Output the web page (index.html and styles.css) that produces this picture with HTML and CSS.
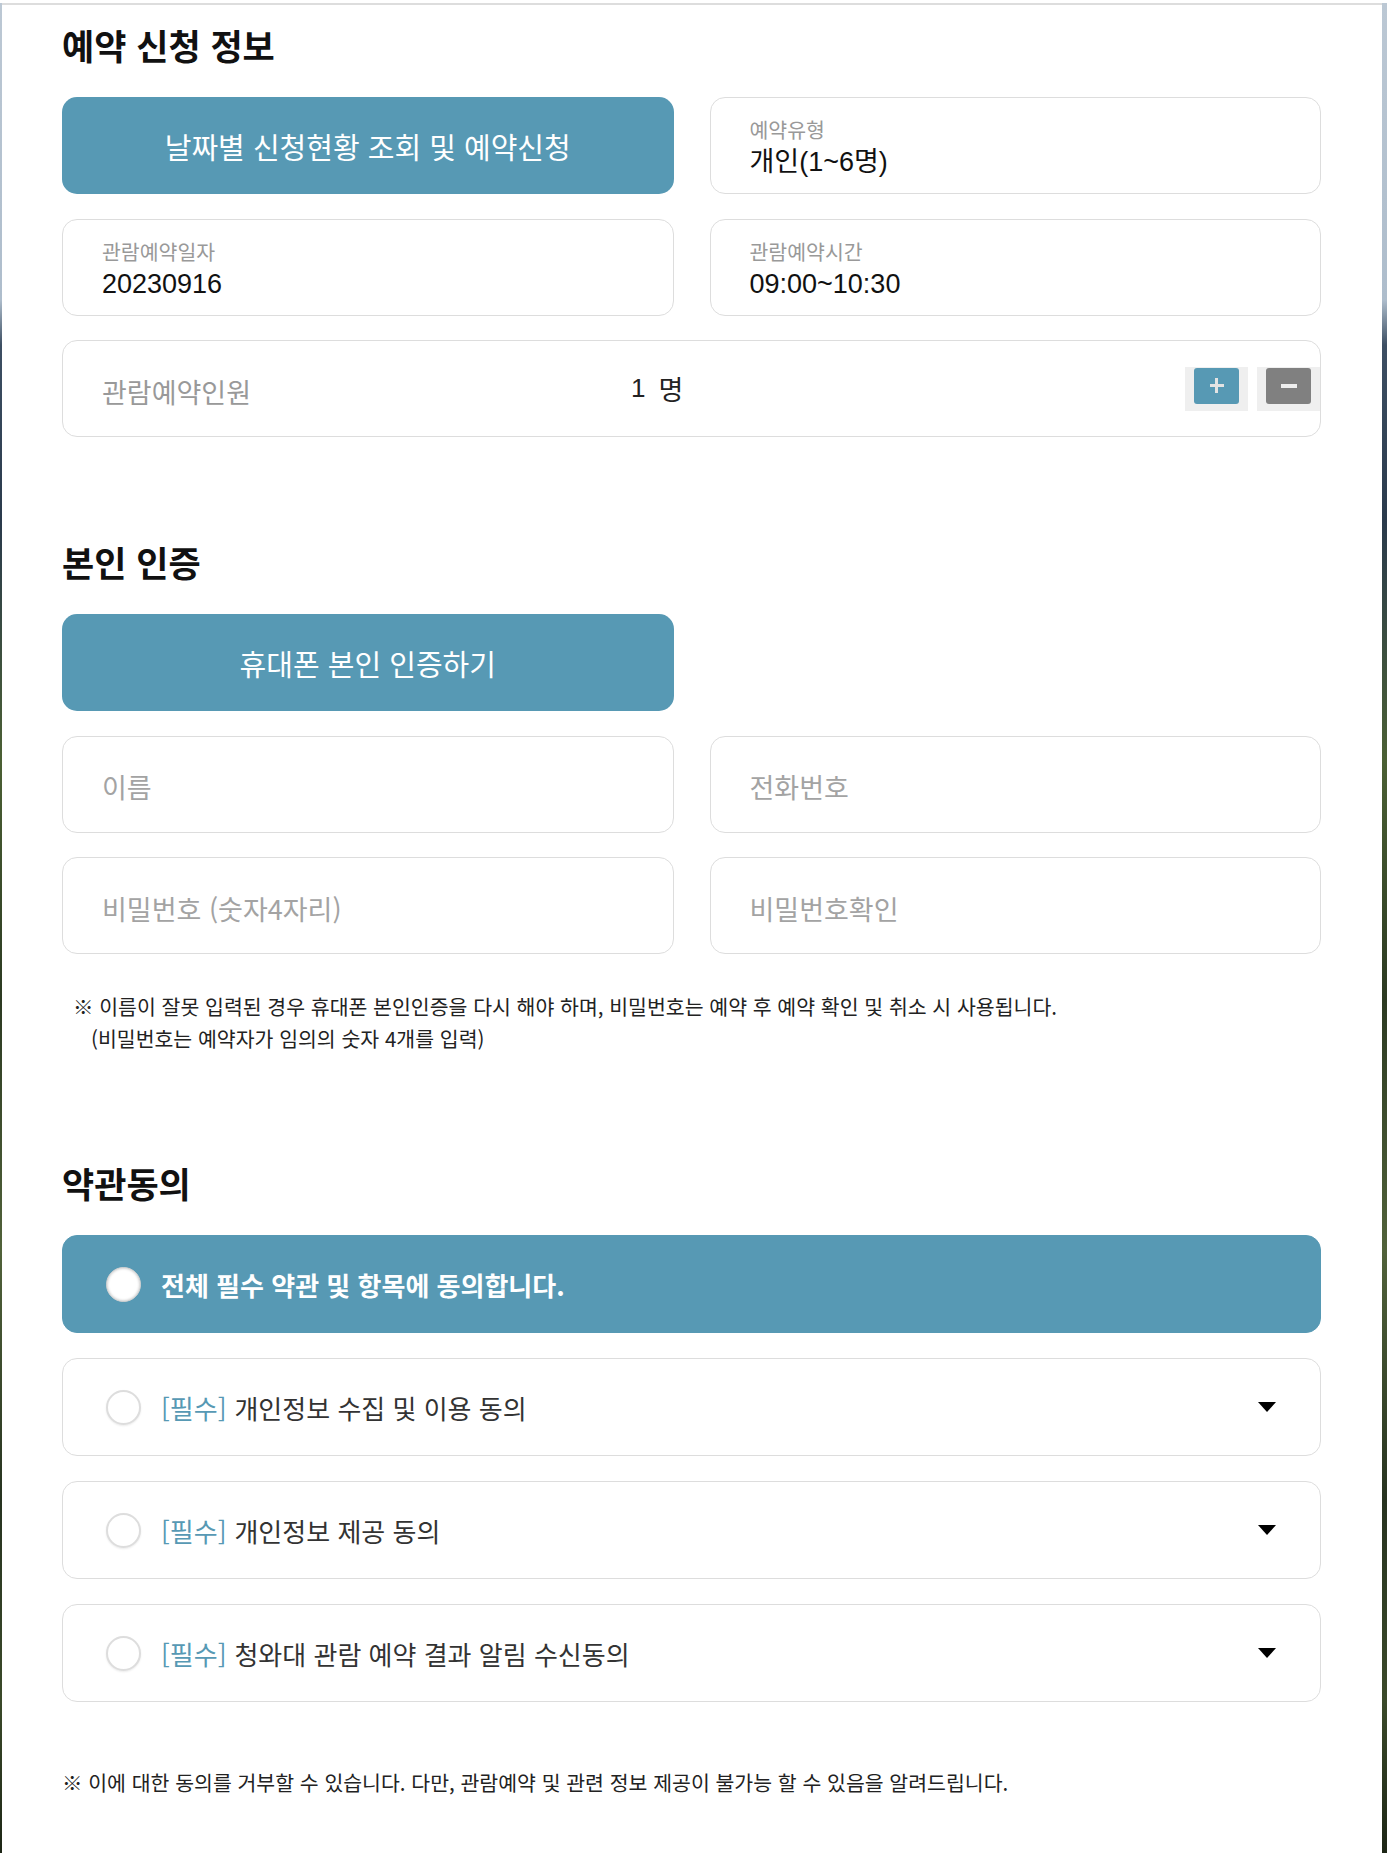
FILE: index.html
```html
<!DOCTYPE html>
<html lang="ko">

<head>
    <meta charset="UTF-8">
    <meta name="viewport" content="width=device-width, initial-scale=1.0">
    <title>관람 예약 신청</title>
    <link rel="stylesheet" href="styles.css">
</head>

<body>
<div id="reserve">
    <h3 class="sec-title first">예약 신청 정보</h3>
    <div class="form-grid">
        <button type="button" class="btn-main">날짜별 신청현황 조회 및 예약신청</button>
        <div class="info-box">
            <div class="info-label">예약유형</div>
            <div class="info-val">개인(1~6명)</div>
        </div>
        <div class="info-box">
            <div class="info-label">관람예약일자</div>
            <div class="info-val">20230916</div>
        </div>
        <div class="info-box">
            <div class="info-label">관람예약시간</div>
            <div class="info-val">09:00~10:30</div>
        </div>
        <div class="info-box count-box">
            <span class="count-label">관람예약인원</span>
            <span class="count-num">1</span><span class="count-unit">명</span>
            <div class="count-ctrl">
                <span class="ctrl-cell"><button type="button" class="ctrl-btn plus"><i class="bar-h"></i><i class="bar-v"></i></button></span>
                <span class="ctrl-cell"><button type="button" class="ctrl-btn minus"><i class="bar-h"></i></button></span>
            </div>
        </div>
    </div>

    <h3 class="sec-title">본인 인증</h3>
    <div class="form-grid">
        <button type="button" class="btn-main">휴대폰 본인 인증하기</button>
        <input type="text" class="inp row-start" placeholder="이름">
        <input type="text" class="inp" placeholder="전화번호">
        <input type="password" class="inp" placeholder="비밀번호 (숫자4자리)">
        <input type="password" class="inp" placeholder="비밀번호확인">
    </div>
    <p class="note">※ 이름이 잘못 입력된 경우 휴대폰 본인인증을 다시 해야 하며, 비밀번호는 예약 후 예약 확인 및 취소 시 사용됩니다.<br>
        <span class="note-sub">(비밀번호는 예약자가 임의의 숫자 4개를 입력)</span></p>

    <h3 class="sec-title terms">약관동의</h3>
    <div class="agree-list">
        <div class="agree-item agree-all"><span class="radio"></span>전체 필수 약관 및 항목에 동의합니다.</div>
        <div class="agree-item"><span class="radio"></span><span class="req">[필수]</span>개인정보 수집 및 이용 동의<span class="arrow"></span></div>
        <div class="agree-item"><span class="radio"></span><span class="req">[필수]</span>개인정보 제공 동의<span class="arrow"></span></div>
        <div class="agree-item"><span class="radio"></span><span class="req">[필수]</span>청와대 관람 예약 결과 알림 수신동의<span class="arrow"></span></div>
    </div>
    <p class="note bottom-note">※ 이에 대한 동의를 거부할 수 있습니다. 다만, 관람예약 및 관련 정보 제공이 불가능 할 수 있음을 알려드립니다.</p>
</div>
</body>

</html>
```

FILE: styles.css
```css
html, body {
    margin: 0;
}
body {
    padding-top: 3px;
    font-family: "Noto Sans CJK KR", "Noto Sans", sans-serif;
    color: #222;
    background: linear-gradient(#fff 0, #fff 3px, #bcc8d4 3px, #aebdcc 300px, #3d4f63 345px, #2a3a4c 520px, #4b6034 760px, #2c3a22 1000px, #51623a 1250px, #273320 1500px, #3b4a2a 1700px, #1d2616 1853px);
}
#reserve {
    margin: 0 5px 0 2px;
    min-height: calc(100vh - 3px);
    box-sizing: border-box;
    border-top: 2px solid #ddd;
    background: #fff;
    padding: 0 61px 20px 60px;
}

/* 제목 */
.sec-title {
    margin: 105px 0 32px;
    font-size: 35px;
    line-height: 40px;
    font-weight: 700;
    color: #111;
}
.sec-title.first {
    margin-top: 20px;
}
.sec-title.terms {
    margin-top: 109px;
}

.form-grid {
    display: grid;
    grid-template-columns: 1fr 1fr;
    column-gap: 36px;
    row-gap: 24.5px;
}
.row-start {
    grid-column: 1;
}

.btn-main {
    height: 97px;
    border: 0;
    border-radius: 15px;
    background: #5799b4;
    color: #fff;
    font: 29px "Noto Sans CJK KR", sans-serif;
    cursor: pointer;
}

.info-box {
    height: 97px;
    box-sizing: border-box;
    border: 1px solid #ddd;
    border-radius: 15px;
    padding: 20px 20px 0 39px;
}
.info-label {
    font-size: 20.5px;
    line-height: 22px;
    color: #999;
}
.info-val {
    margin-top: 6px;
    font: 27px/32px "Liberation Sans", "Noto Sans CJK KR", sans-serif;
    color: #111;
}

/* 인원 */
.count-box {
    grid-column: 1 / -1;
    display: flex;
    align-items: center;
    padding: 0 0 0 39px;
}
.count-label {
    width: 529px;
    padding-top: 5px;
    font-size: 27px;
    color: #999;
}
.count-num {
    font: 26px "Liberation Sans", sans-serif;
    color: #222;
}
.count-unit {
    margin-left: 13px;
    font-size: 27px;
    color: #222;
}
.count-ctrl {
    margin-left: auto;
    display: flex;
    gap: 9px;
}
.ctrl-cell {
    display: block;
    width: 63px;
    height: 44px;
    box-sizing: border-box;
    padding: 1px 9px 0;
    background: #efefef;
}
.ctrl-btn {
    display: grid;
    place-items: center;
    width: 45px;
    height: 36px;
    padding: 0;
    border: 0;
    border-radius: 3px;
    cursor: pointer;
}
.ctrl-btn.plus {
    background: #5799b4;
}
.ctrl-btn.minus {
    background: #808080;
}
.ctrl-btn i {
    grid-area: 1 / 1;
    background: #e3e3e3;
}
.plus .bar-h {
    width: 14px;
    height: 3px;
}
.plus .bar-v {
    width: 3px;
    height: 15px;
}
.minus .bar-h {
    width: 16px;
    height: 4px;
    background: #eee;
}

/* 본인인증 */
.inp {
    width: 100%;
    min-width: 0;
    height: 97px;
    box-sizing: border-box;
    border: 1px solid #ddd;
    border-radius: 15px;
    padding: 5px 20px 0 39px;
    font: 27px "Noto Sans CJK KR", sans-serif;
    color: #222;
    outline: none;
}
.inp::placeholder {
    color: #a3a3a3;
}

.note {
    margin: 36px 0 0 11px;
    font-size: 20.5px;
    line-height: 32px;
    color: #222;
}
.note-sub {
    padding-left: 18px;
}
.bottom-note {
    margin: 64px 0 0;
}

/* 약관 */
.agree-list {
    display: flex;
    flex-direction: column;
    gap: 25px;
}
.agree-item {
    display: flex;
    align-items: center;
    height: 98px;
    box-sizing: border-box;
    border: 1px solid #ddd;
    border-radius: 15px;
    padding: 0 44px 0 43px;
    font-size: 26px;
    color: #333;
}
.agree-all {
    background: #5799b4;
    border-color: #5799b4;
    color: #fff;
    font-weight: 700;
}
.radio {
    flex-shrink: 0;
    width: 35px;
    height: 35px;
    box-sizing: border-box;
    margin-right: 20px;
    border: 2px solid #ddd;
    border-radius: 50%;
    background: #fff;
    box-shadow: 0 1px 2px rgba(0,0,0,0.08);
}
.agree-all .radio {
    border: 1px solid #cfcfcf;
    box-shadow: inset 0 0 3px rgba(0,0,0,0.3);
}
.req {
    margin-right: 8px;
    color: #5799b4;
}
.arrow {
    margin-left: auto;
    border-left: 9px solid transparent;
    border-right: 9px solid transparent;
    border-top: 10px solid #000;
}
```
